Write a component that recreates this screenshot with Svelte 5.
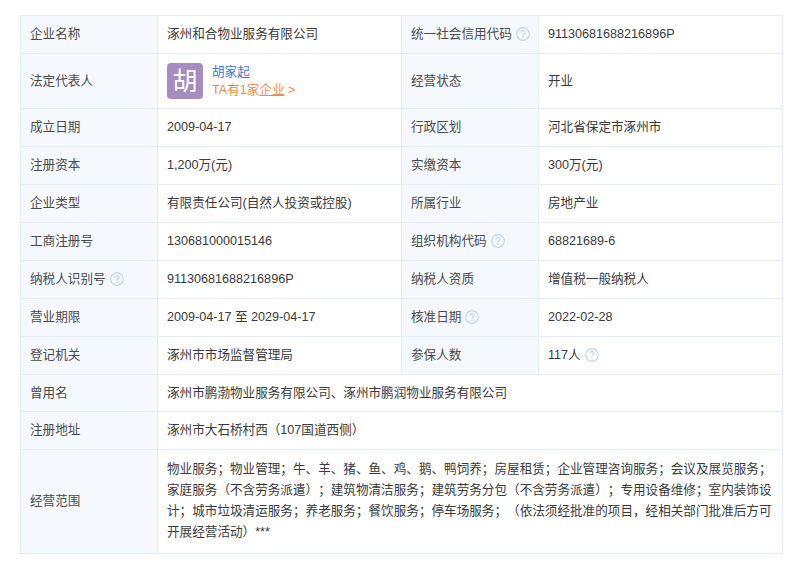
<script>
  const rows = [
    [{ l: '企业名称' }, { v: '涿州和合物业服务有限公司' }, { l: '统一社会信用代码', tip: true }, { v: '91130681688216896P' }],
    [{ l: '成立日期' }, { v: '2009-04-17' }, { l: '行政区划' }, { v: '河北省保定市涿州市' }],
    [{ l: '注册资本' }, { v: '1,200万(元)' }, { l: '实缴资本' }, { v: '300万(元)' }],
    [{ l: '企业类型' }, { v: '有限责任公司(自然人投资或控股)' }, { l: '所属行业' }, { v: '房地产业' }],
    [{ l: '工商注册号' }, { v: '130681000015146' }, { l: '组织机构代码', tip: true }, { v: '68821689-6' }],
    [{ l: '纳税人识别号', tip: true }, { v: '91130681688216896P' }, { l: '纳税人资质' }, { v: '增值税一般纳税人' }],
    [{ l: '营业期限' }, { v: '2009-04-17 至 2029-04-17' }, { l: '核准日期', tip: true }, { v: '2022-02-28' }],
    [{ l: '登记机关' }, { v: '涿州市市场监督管理局' }, { l: '参保人数' }, { v: '117人', tip: true }]
  ];
  const first = rows[0];
  const rest = rows.slice(1);
  const scope = '物业服务；物业管理；牛、羊、猪、鱼、鸡、鹅、鸭饲养；房屋租赁；企业管理咨询服务；会议及展览服务；家庭服务（不含劳务派遣）；建筑物清洁服务；建筑劳务分包（不含劳务派遣）；专用设备维修；室内装饰设计；城市垃圾清运服务；养老服务；餐饮服务；停车场服务；（依法须经批准的项目，经相关部门批准后方可开展经营活动）***';
</script>

{#snippet tip()}
  <svg class="tip" viewBox="0 0 14 14" width="14" height="14" aria-hidden="true">
    <circle cx="7" cy="7" r="6.3" fill="none" stroke="#c4d6e8" stroke-width="1.2" />
    <path d="M5.1 5.5a1.95 1.95 0 1 1 3 1.6c-.7.45-1.1.8-1.1 1.6" fill="none" stroke="#c4d6e8" stroke-width="1.2" />
    <circle cx="7" cy="10.4" r=".8" fill="#c4d6e8" />
  </svg>
{/snippet}

{#snippet row(cells)}
  <tr>
    {#each cells as c}
      {#if c.l}
        <th>{c.l}{#if c.tip}{@render tip()}{/if}</th>
      {:else}
        <td>{c.v}{#if c.tip}{@render tip()}{/if}</td>
      {/if}
    {/each}
  </tr>
{/snippet}

<main class="page">
  <table>
    <colgroup>
      <col class="c1" /><col class="c2" /><col class="c3" /><col class="c4" />
    </colgroup>
    <tbody>
      {@render row(first)}
      <tr class="tall">
        <th>法定代表人</th>
        <td>
          <div class="person">
            <div class="avatar">胡</div>
            <div class="info">
              <div class="name">胡家起</div>
              <div class="more">TA有1家<span class="u">企业</span> &gt;</div>
            </div>
          </div>
        </td>
        <th>经营状态</th>
        <td>开业</td>
      </tr>
      {#each rest as r}
        {@render row(r)}
      {/each}
      <tr class="short">
        <th>曾用名</th>
        <td colspan="3">涿州市鹏渤物业服务有限公司、涿州市鹏润物业服务有限公司</td>
      </tr>
      <tr>
        <th>注册地址</th>
        <td colspan="3">涿州市大石桥村西（107国道西侧）</td>
      </tr>
      <tr class="scope-row">
        <th>经营范围</th>
        <td colspan="3" class="scope">{scope}</td>
      </tr>
    </tbody>
  </table>
</main>

<style>
  :global(body) {
    margin: 0;
    background: #fff;
  }
  .page {
    padding: 15px 17px 15px 20px;
    font-family: "Liberation Sans", "Noto Sans CJK SC", sans-serif;
    font-size: 12.6px;
    color: #3a3a3a;
    text-spacing-trim: space-all;
  }
  table {
    width: 762px;
    table-layout: fixed;
    border-collapse: collapse;
  }
  .c1 { width: 137px; }
  .c2 { width: 244px; }
  .c3 { width: 137px; }
  .c4 { width: 244px; }
  tr { height: 38px; }
  tr.tall { height: 55px; }
  tr.short { height: 37px; }
  tr.scope-row { height: 104px; }
  th, td {
    border: 1px solid #e4eef6;
    padding: 0 9px;
    line-height: 19px;
    text-align: left;
    font-weight: 400;
    vertical-align: middle;
  }
  th {
    background: #f5f9fd;
    color: #4a4a4a;
    white-space: nowrap;
  }
  .tip {
    vertical-align: -2.5px;
    margin-left: 4px;
  }
  .scope {
    line-height: 21px;
    padding-bottom: 1px;
  }
  .person {
    display: flex;
    align-items: center;
    gap: 9px;
  }
  .avatar {
    width: 36px;
    height: 36px;
    border-radius: 4px;
    background: #a58dbd;
    color: #fff;
    font-size: 25px;
    line-height: 36px;
    text-align: center;
  }
  .info {
    line-height: 18px;
  }
  .name {
    color: #3d78d8;
  }
  .more {
    color: #f5894a;
  }
  .u {
    text-decoration: underline;
  }
</style>
